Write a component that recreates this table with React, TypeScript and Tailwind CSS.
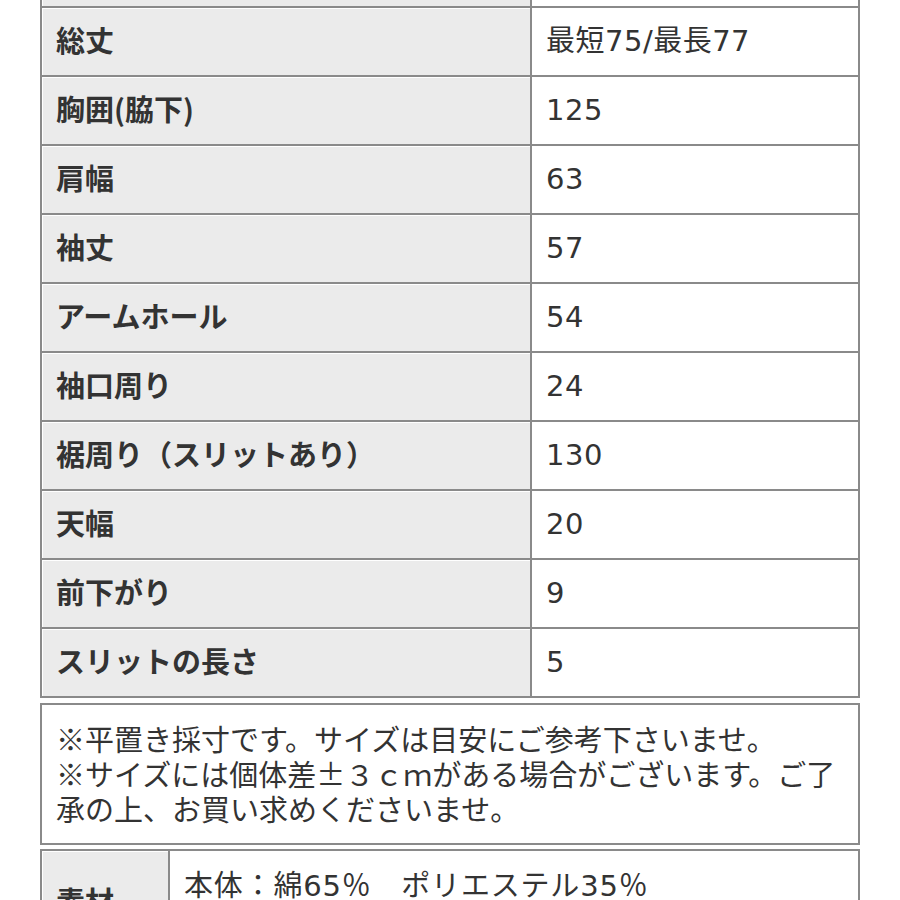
const rows: [string, string][] = [
  ['', ''],
  ['総丈', '最短75/最長77'],
  ['胸囲(脇下)', '125'],
  ['肩幅', '63'],
  ['袖丈', '57'],
  ['アームホール', '54'],
  ['袖口周り', '24'],
  ['裾周り（スリットあり）', '130'],
  ['天幅', '20'],
  ['前下がり', '9'],
  ['スリットの長さ', '5'],
];

const font = { fontFamily: '"Noto Sans CJK JP", "Noto Sans", sans-serif' };
const valueFont = { fontFamily: '"DejaVu Sans", "Noto Sans CJK JP", sans-serif' };

export default function App() {
  return (
    <div className="w-[900px] h-[900px] overflow-hidden bg-white text-[#333] text-[29px]" style={font}>
      <div className="px-[40px]">
        <div className="mt-[-63px] grid grid-cols-[490px_1fr] border-b-2 border-[#8a8a8a]">
          {rows.map(([label, value], i) => (
            <div key={`row-${i}`} className="contents">
              <div className="h-[69px] flex items-center pl-[14px] pb-[3px] border-t-2 border-l-2 border-[#8a8a8a] bg-[#ebebeb] font-bold shadow-[inset_1px_1px_0_#fff]">
                {label}
              </div>
              <div
                className="h-[69px] flex items-center pl-[14px] border-t-2 border-l-2 border-r-2 border-[#8a8a8a] bg-white text-[29px] tracking-[0.5px]"
                style={valueFont}
              >
                {value}
              </div>
            </div>
          ))}
        </div>
        <div className="mt-[5px] border-2 border-[#8a8a8a] px-[14px] pt-[16px] pb-[17px] leading-[35px] whitespace-nowrap">
          ※平置き採寸です。サイズは目安にご参考下さいませ。
          <br />
          ※サイズには個体差±３ｃｍがある場合がございます。ご了
          <br />
          承の上、お買い求めくださいませ。
        </div>
        <div className="mt-[4px] grid grid-cols-[128px_1fr] border-t-2 border-[#8a8a8a]">
          <div className="h-[100px] flex items-center pl-[14px] border-l-2 border-[#8a8a8a] bg-[#ebebeb] font-bold shadow-[inset_1px_1px_0_#fff]">
            素材
          </div>
          <div className="h-[100px] pl-[14px] pt-[15px] border-l-2 border-r-2 border-[#8a8a8a] leading-[35px] whitespace-nowrap tracking-[0.8px]">
            本体：綿<span style={valueFont}>65</span>％　ポリエステル<span style={valueFont}>35</span>％
          </div>
        </div>
      </div>
    </div>
  );
}
